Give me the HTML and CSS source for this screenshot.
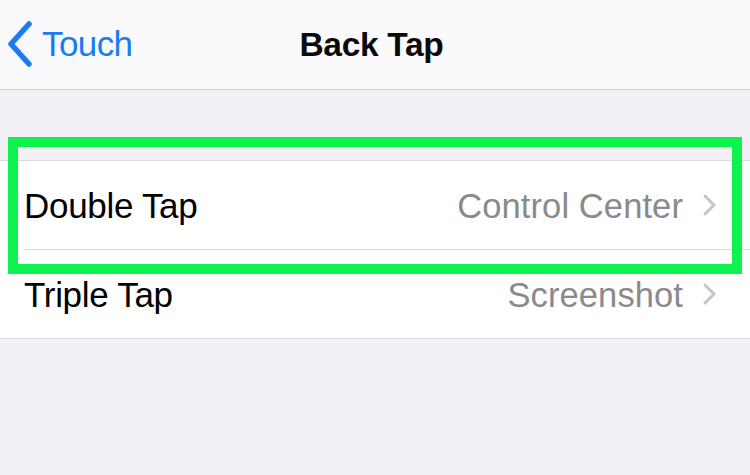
FILE: index.html
```html
<!DOCTYPE html>
<html>
<head>
<meta charset="utf-8">
<link rel="stylesheet" href="styles.css">
</head>
<body>
<div class="screen">
  <header class="nav">
    <div class="back">
      <svg class="back-icon" width="28" height="46" viewBox="0 0 28 46"><path d="M23 3 L5 23 L23 43" fill="none" stroke="#1a7cf0" stroke-width="5.5" stroke-linecap="round" stroke-linejoin="round"/></svg>
      <span class="back-text">Touch</span>
    </div>
    <div class="title">Back Tap</div>
  </header>
  <div class="spacer"></div>
  <section class="group">
    <div class="row">
      <div class="row-inner sep">
        <span class="label">Double Tap</span>
        <span class="value">Control Center</span>
        <svg class="chev" width="16" height="24" viewBox="0 0 16 24"><path d="M3 3 L12 12 L3 21" fill="none" stroke="#c4c4c7" stroke-width="3" stroke-linecap="round" stroke-linejoin="round"/></svg>
      </div>
    </div>
    <div class="row">
      <div class="row-inner">
        <span class="label">Triple Tap</span>
        <span class="value">Screenshot</span>
        <svg class="chev" width="16" height="24" viewBox="0 0 16 24"><path d="M3 3 L12 12 L3 21" fill="none" stroke="#c4c4c7" stroke-width="3" stroke-linecap="round" stroke-linejoin="round"/></svg>
      </div>
    </div>
  </section>
  <div class="highlight"></div>
</div>
</body>
</html>
```
FILE: styles.css
```css
html, body {
  margin: 0;
  padding: 0;
}
body {
  width: 750px;
  height: 475px;
  overflow: hidden;
  background: #f2eff5;
  font-family: "Liberation Sans", Arial, sans-serif;
}
.screen {
  position: relative;
  width: 750px;
  height: 475px;
}
.nav {
  position: relative;
  height: 89px;
  background: #faf9fc;
  border-bottom: 1px solid #cfccd3;
  display: flex;
  align-items: center;
}
.back {
  display: flex;
  align-items: center;
  padding-left: 6px;
  gap: 8px;
  margin-top: -2px;
}
.back-icon {
  display: block;
}
.back-text {
  color: #1a7cf0;
  font-size: 35px;
  letter-spacing: -0.6px;
}
.title {
  position: absolute;
  left: 0;
  right: 0;
  top: 26px;
  text-align: center;
  padding-right: 7px;
  font-size: 33.5px;
  font-weight: bold;
  color: #0a0a0a;
  letter-spacing: -0.3px;
}
.spacer {
  height: 70px;
}
.group {
  background: #ffffff;
  border-top: 1px solid #dedce2;
  border-bottom: 1px solid #dedce2;
}
.row {
  padding-left: 24px;
}
.row-inner {
  height: 88px;
  display: flex;
  align-items: center;
  padding-right: 32px;
}
.row-inner.sep {
  border-bottom: 1px solid #d9d8dc;
}
.label {
  flex: 1;
  font-size: 35px;
  color: #000;
  letter-spacing: -0.3px;
  padding-top: 2px;
}
.value {
  font-size: 34.5px;
  color: #8a8a8e;
  letter-spacing: 0.1px;
  margin-right: 19px;
  padding-top: 2px;
}
.chev {
  display: block;
}
.highlight {
  position: absolute;
  left: 8px;
  top: 137px;
  width: 714px;
  height: 117px;
  border: 10px solid #0df24f;
}
```
